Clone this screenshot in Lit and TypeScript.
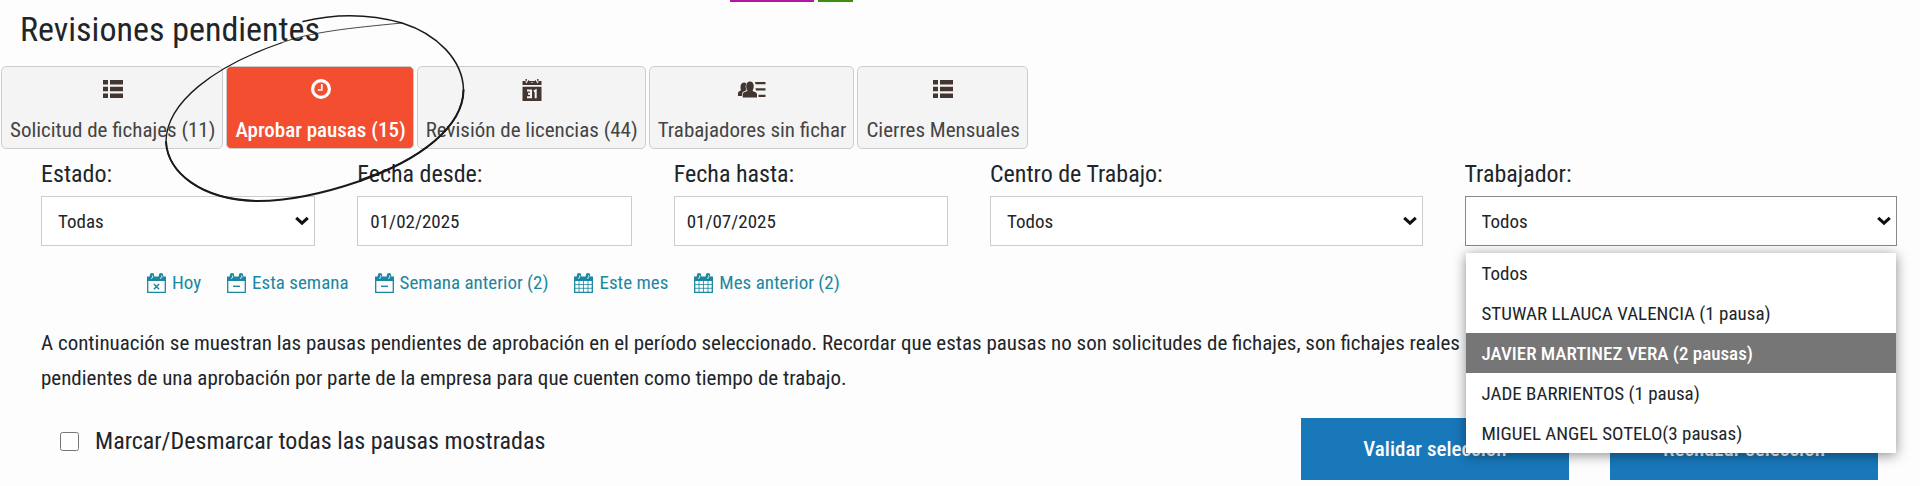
import { LitElement, html, css, svg } from "lit";
import { customElement, state } from "lit/decorators.js";

const listIcon = svg`<svg viewBox="0 0 20 20" width="20" height="20" fill="currentColor" aria-hidden="true">
  <path d="M0 1h5v4.4H0zM7 1h13v4.4H7zM0 7.8h5v4.4H0zM7 7.8h13v4.4H7zM0 14.6h5V19H0zM7 14.6h13V19H7z"/></svg>`;
const clockIcon = svg`<svg viewBox="0 0 20 20" width="20" height="20" fill="none" stroke="currentColor" aria-hidden="true">
  <circle cx="10" cy="10" r="8.4" stroke-width="3.2"/><path d="M10.8 5v6H6.8" stroke-width="1.7"/></svg>`;
const dayIcon = svg`<svg viewBox="0 0 20 22" width="20" height="22" aria-hidden="true">
  <path fill="currentColor" d="M.5 2H3l1.500 2.500L6.500 1 9 3.500h2L13.500 1l2 3.500L17 2h2.500v4H.5zM.5 7.800h19V22H.5zM3.500 0H5l-.5 2.500h-1zM15 0h1.500v2.500h-1zM7 2h6v1H7z"/>
  <path fill="none" stroke="#f4f4f4" stroke-width="2" d="M5 11.400h4v6.800H5M6 14.800h3M11.800 12.400l1.900-1v7.800"/></svg>`;
const peopleIcon = svg`<svg viewBox="0 0 28 20" width="28" height="20" fill="currentColor" aria-hidden="true">
  <path d="M0 17v-3c0-1.800 2.500-2 3-3C2 9 2.300 3.500 6 3.500c1 0 1.800.3 2.300 1-1 2.200-.8 4.500.2 6.500-1.300 1.500-4 1-4.500 4v2z"/>
  <path d="M4.700 18.500v-3.300c0-2.400 4.300-2.200 4.800-3.700C7.500 9 7.500 2.500 12 2.500s4.500 6.500 2.500 9c.5 1.500 4.500 1.300 4.500 3.700v3.300z"/>
  <path d="M17 3h10.500v2.200H17.500zM17.500 9.300h10v2.200h-9.500zM20.500 15.800h7V18h-7z"/></svg>`;
const calBase = svg`<path fill="currentColor" d="M0 3.500h2.800V2a2.200 2 0 0 1 4.400 0v1.500h4.600V2a2.200 2 0 0 1 4.400 0v1.500H19V8H0z"/>
  <path fill="none" stroke="currentColor" stroke-width="1.300" d="M.7 7v12.300h17.600V7"/>
  <path fill="none" stroke="#fdfdfd" stroke-width=".9" d="M4 5.200c1.500.6 2.200-1 1.500-2.800M13 5.200c1.500.6 2.200-1 1.500-2.800"/>`;
const calIcon = (kind: string) => svg`<svg viewBox="0 0 19 20" width="19" height="20" aria-hidden="true">
  ${calBase}
  <path fill="none" stroke="currentColor" stroke-width="${kind === "grid" ? 0.8 : 1.4}" d="${
    kind === "x" ? "M6.900 11l5.200 5.200M12.100 11l-5.200 5.200"
    : kind === "minus" ? "M6 13.300h7"
    : "M5 8v11M9.500 8v11M14 8v11M1 11.500h17M1 15.300h17"}"/></svg>`;

@customElement("app-root")
export class AppRoot extends LitElement {
  static styles = css`
    :host { display: block; position: relative; overflow: hidden; background: #fdfdfd; color: #212529;
      font-family: "Roboto Condensed", "Liberation Sans Narrow", Roboto, sans-serif; font-size: 20px; }
    * { box-sizing: border-box; }
    .strip { display: flex; gap: 4px; height: 2px; padding-left: 38%; }
    .pink { width: 84px; background: #b5179e; }
    .green { width: 35px; background: #3f8f0f; }
    h1 { margin: 0; padding: 5px 20px 0; font-size: 34px; line-height: 44px; font-weight: 400; }
    .tabs { display: flex; gap: 3px; padding: 15px 1px 0; }
    .tab { display: flex; flex-direction: column; align-items: center; justify-content: space-between;
      height: 83px; padding: 12px 7px 4px 8px; border: 1px solid #ccc; border-radius: 5px; background: #f4f4f4;
      color: #444; font: inherit; font-size: 21px; line-height: 28px; white-space: nowrap; }
    .tab svg { color: #43352f; }
    .tab.on { background: #f34e30; color: #fff; font-weight: 500; }
    .tab.on svg { color: #fff; }
    .fields { display: grid; grid-template-columns: repeat(12, minmax(0, 1fr)); column-gap: 42px; padding: 11px 23px 0 41px; }
    .field { grid-column: span 2; }
    .field.wide { grid-column: span 3; }
    .field label { display: block; font-size: 24px; line-height: 28px; margin-bottom: 8px; }
    .box { position: relative; }
    .box input, .box select { display: block; width: 100%; height: 50px; margin: 0; padding: 0 12px; border: 1px solid #ccc;
      border-radius: 0; background: #fff; color: #212529; font: inherit; font-size: 19px; appearance: none; outline: none; }
    .box select { padding: 0 16px; }
    .box .opened { border-color: #888; }
    .chev { position: absolute; right: 6px; top: 20px; pointer-events: none; }
    .menu { position: absolute; z-index: 2; top: 57px; left: 1px; right: 1px; margin: 0; padding: 0; list-style: none;
      background: #fff; box-shadow: 0 2px 12px rgba(0, 0, 0, .45); }
    .menu li { height: 40px; padding: 0 16px; line-height: 41px; font-size: 19px; white-space: nowrap; }
    .menu .hot { background: #767676; color: #fff; font-weight: 500; }
    .quick { display: flex; gap: 26px; padding: 23px 0 0 147px; font-size: 19px; line-height: 28px; }
    .quick a { display: flex; align-items: center; gap: 6px; color: #1c87a0; text-decoration: none; white-space: nowrap; }
    .note { margin: 0; padding: 29px 41px 0; line-height: 35px; font-size: 21px; white-space: nowrap; }
    .foot { display: flex; align-items: center; justify-content: space-between; padding: 22px 42px 6px 60px; }
    .check { display: flex; align-items: center; gap: 16px; margin-top: -16px; font-size: 24px; line-height: 28px; }
    .check input { width: 19px; height: 19px; margin: 0; }
    .actions { display: flex; gap: 41px; }
    .actions button { width: 268px; height: 62px; padding: 0; border: 0; background: #1878ba; color: #fff;
      font: inherit; font-size: 21px; font-weight: 500; }
    .ring { position: absolute; left: 160px; top: 10px; z-index: 1; pointer-events: none; }
  `;

  @state() private tab = 1;

  private tabs = [
    [listIcon, "Solicitud de fichajes (11)"],
    [clockIcon, "Aprobar pausas (15)"],
    [dayIcon, "Revisión de licencias (44)"],
    [peopleIcon, "Trabajadores sin fichar"],
    [listIcon, "Cierres Mensuales"],
  ] as const;

  private workers = ["Todos", "STUWAR LLAUCA VALENCIA (1 pausa)", "JAVIER MARTINEZ VERA (2 pausas)",
    "JADE BARRIENTOS (1 pausa)", "MIGUEL ANGEL SOTELO(3 pausas)"];

  private links = [["x", "Hoy"], ["minus", "Esta semana"], ["minus", "Semana anterior (2)"],
    ["grid", "Este mes"], ["grid", "Mes anterior (2)"]];

  private chevron() {
    return html`<svg class="chev" viewBox="0 0 14 10" width="14" height="10" aria-hidden="true">
      <path d="M1.200 1.800 7 7.200l5.800-5.400" fill="none" stroke="#111" stroke-width="3"/></svg>`;
  }

  render() {
    return html`
      <div class="strip"><span class="pink"></span><span class="green"></span></div>
      <h1>Revisiones pendientes</h1>
      <nav class="tabs">
        ${this.tabs.map(([icon, text], i) => html`
          <button class="tab ${i === this.tab ? "on" : ""}" @click=${() => (this.tab = i)}>${icon}<span>${text}</span></button>`)}
      </nav>
      <div class="fields">
        <div class="field"><label for="estado">Estado:</label>
          <div class="box"><select id="estado"><option>Todas</option></select>${this.chevron()}</div></div>
        <div class="field"><label for="desde">Fecha desde:</label>
          <div class="box"><input id="desde" type="text" value="01/02/2025"></div></div>
        <div class="field"><label for="hasta">Fecha hasta:</label>
          <div class="box"><input id="hasta" type="text" value="01/07/2025"></div></div>
        <div class="field wide"><label for="centro">Centro de Trabajo:</label>
          <div class="box"><select id="centro"><option>Todos</option></select>${this.chevron()}</div></div>
        <div class="field wide"><label for="trabajador">Trabajador:</label>
          <div class="box"><select id="trabajador" class="opened">${this.workers.map((w) => html`<option>${w}</option>`)}</select>${this.chevron()}
            <ul class="menu" role="listbox" aria-label="Trabajador">
              ${this.workers.map((w, i) => html`<li role="option" aria-selected=${i === 2} class=${i === 2 ? "hot" : ""}>${w}</li>`)}
            </ul></div></div>
      </div>
      <nav class="quick">${this.links.map(([k, t]) => html`<a href="#">${calIcon(k)}<span>${t}</span></a>`)}</nav>
      <p class="note">A continuación se muestran las pausas pendientes de aprobación en el período seleccionado. Recordar que estas pausas no son solicitudes de fichajes, son fichajes reales<br>pendientes de una aprobación por parte de la empresa para que cuenten como tiempo de trabajo.</p>
      <div class="foot">
        <label class="check"><input type="checkbox"><span>Marcar/Desmarcar todas las pausas mostradas</span></label>
        <div class="actions"><button>Validar selección</button><button>Rechazar selección</button></div>
      </div>
      <svg class="ring" viewBox="160 10 310 196" width="310" height="196" fill="none" stroke="#1a1a1a" stroke-linecap="round" aria-hidden="true">
        <path stroke-width="1.500" d="M303 21.500C338 13 370 14 402 23C437 34 463 60 463.500 90C463 127 420 160 360 180"/>
        <path stroke-width="2" d="M463.500 90C463 127 420 160 360 181C325 193 290 201 258 201C200 200 168 172 166 142"/>
        <path stroke-width="1.300" d="M258 201C200 200 168 172 166 142C166 102 215 66 281 43"/>
        <path stroke-width=".8" d="M281 43C310 32 350 28 402 23"/>
      </svg>`;
  }
}
